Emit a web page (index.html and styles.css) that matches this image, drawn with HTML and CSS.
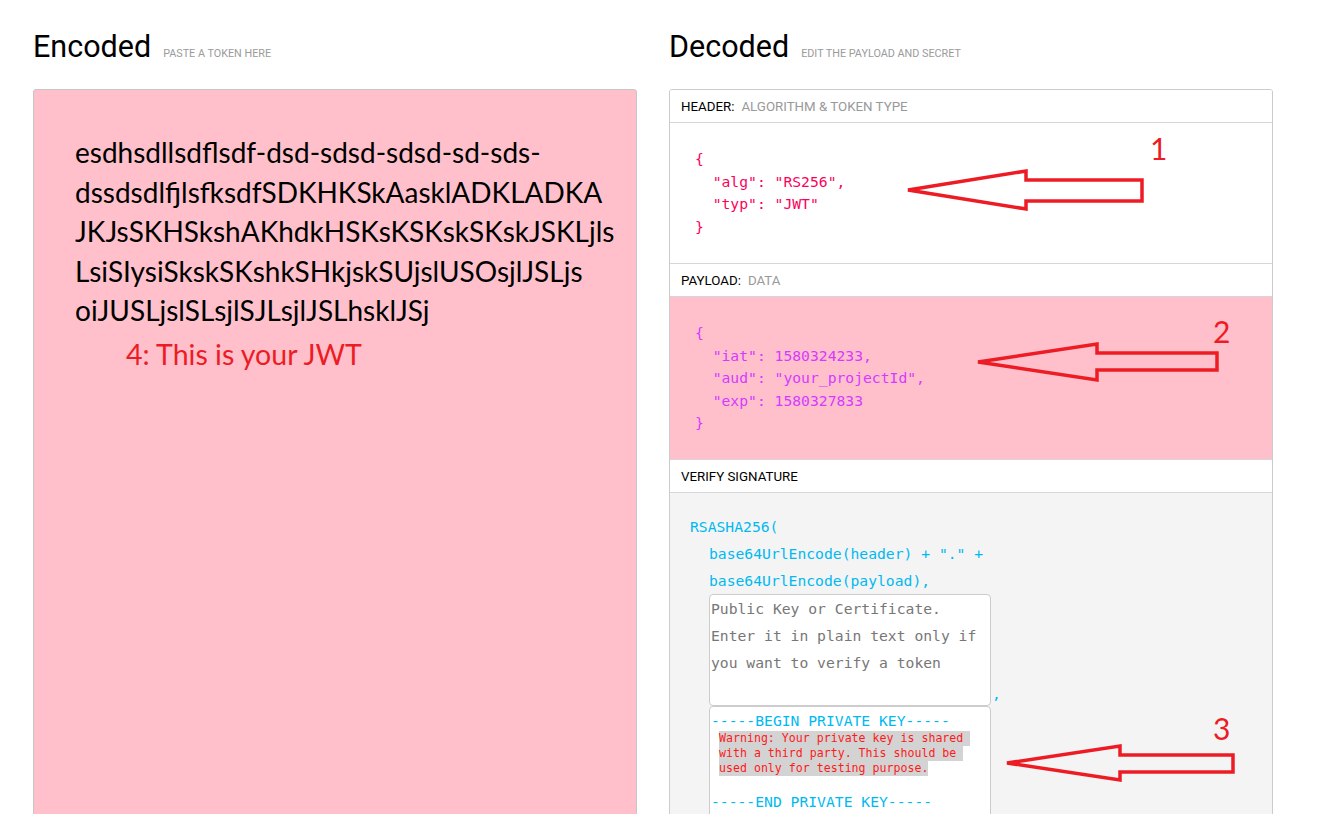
FILE: index.html
```html
<!DOCTYPE html>
<html lang="en">
<head>
<meta charset="utf-8">
<title>JWT Debugger</title>
<link rel="stylesheet" href="styles.css">
</head>
<body>
<div class="page">
  <section class="col">
    <h2 class="title">Encoded<span class="sub">PASTE A TOKEN HERE</span></h2>
    <div class="encoded">
      <div class="token">esdhsdllsdflsdf-dsd-sdsd-sdsd-sd-sds-<br>dssdsdlfjlsfksdfSDKHKSkAasklADKLADKA<br>JKJsSKHSkshAKhdkHSKsKSKskSKskJSKLjls<br>LsiSIysiSkskSKshkSHkjskSUjslUSOsjlJSLjs<br>oiJUSLjslSLsjlSJLsjlJSLhsklJSj</div>
      <div class="note">4: This is your JWT</div>
    </div>
  </section>
  <section class="col">
    <h2 class="title">Decoded<span class="sub">EDIT THE PAYLOAD AND SECRET</span></h2>
    <div class="decoded">
      <div class="label">HEADER:<span class="desc">ALGORITHM &amp; TOKEN TYPE</span></div>
      <pre class="code code-header">{
  "alg": "RS256",
  "typ": "JWT"
}</pre>
      <div class="label">PAYLOAD:<span class="desc">DATA</span></div>
      <pre class="code code-payload">{
  "iat": 1580324233,
  "aud": "your_projectId",
  "exp": 1580327833
}</pre>
      <div class="label">VERIFY SIGNATURE</div>
      <div class="verify">
        <div class="sig">RSASHA256(</div>
        <div class="indent">
          <div class="sig">base64UrlEncode(header) + "." +</div>
          <div class="sig">base64UrlEncode(payload),</div>
          <div class="keyrow">
            <div class="key key-public">Public Key or Certificate.<br>Enter it in plain text only if<br>you want to verify a token</div>
            <span class="sig comma">,</span>
          </div>
          <div class="key key-private">
            <div class="sig">-----BEGIN PRIVATE KEY-----</div>
            <div class="warning"><span class="warn-line">Warning: Your private key is shared </span><span class="warn-line">with a third party. This should be </span><span class="warn-line">used only for testing purpose.</span></div>
            <div class="sig">-----END PRIVATE KEY-----</div>
          </div>
        </div>
      </div>
    </div>
  </section>
  <svg class="annot" width="1319" height="814" viewBox="0 0 1319 814" aria-hidden="true">
    <polygon points="908,190 1026,171 1026,180 1142,180 1142,201 1026,201 1026,209"/>
    <polygon points="978,362 1097,344 1097,353 1217,353 1217,370 1097,370 1097,380"/>
    <polygon points="1007,763 1120,746 1120,755 1233,755 1233,772 1120,772 1120,780"/>
    <text x="1150" y="160">1</text>
    <text x="1213" y="343">2</text>
    <text x="1213" y="740">3</text>
  </svg>
</div>
</body>
</html>
```

FILE: styles.css
```css
html, body {
  margin: 0;
  padding: 0;
  height: 100%;
  overflow: hidden;
  background: #ffffff;
}

.page {
  position: relative;
  display: flex;
  gap: 32px;
  padding: 30px 0 0 33px;
  font-family: Roboto, "Liberation Sans", sans-serif;
  color: #000;
}

.col {
  width: 604px;
  flex: none;
}

.title {
  height: 34px;
  margin: 0 0 25px 0;
  font-family: Roboto, "Liberation Sans", sans-serif;
  font-size: 30.5px;
  font-weight: 400;
  line-height: 34px;
}

.sub {
  margin-left: 12px;
  font-size: 10.8px;
  line-height: 1;
  color: #9b9b9b;
  vertical-align: baseline;
}

.encoded {
  box-sizing: border-box;
  height: 760px;
  background: #ffc0cb;
  border: 1px solid #c6c6c6;
  border-radius: 3px;
  padding: 43px 20px 0 41px;
  font-family: Lato, "Open Sans", sans-serif;
}

.token {
  font-size: 28px;
  line-height: 39.5px;
  white-space: nowrap;
  color: #000;
}

.note {
  margin: 4px 0 0 51px;
  font-size: 28.5px;
  line-height: 39.5px;
  color: #ed1c24;
}

.decoded {
  box-sizing: border-box;
  height: 760px;
  border: 1px solid #cccccc;
  border-radius: 3px;
  overflow: hidden;
  display: flex;
  flex-direction: column;
}

.label {
  height: 32px;
  flex: none;
  display: flex;
  align-items: center;
  padding-left: 11px;
  font-size: 13.3px;
  color: #000;
  border-bottom: 1px solid #d6d6d6;
  background: #fff;
}

.desc {
  margin-left: 7px;
  color: #999999;
}

.code {
  margin: 0;
  flex: none;
  font-family: "DejaVu Sans Mono", "Liberation Mono", monospace;
  font-size: 14.7px;
  line-height: 22.5px;
  border-bottom: 1px solid #d6d6d6;
}

.code-header {
  padding: 25px 0 25px 25px;
  color: #fb015b;
  background: #fff;
}

.code-payload {
  padding: 25px 0 24.5px 25px;
  color: #d63aff;
  background: #ffc0cb;
}

.verify {
  flex: 1;
  background: #f4f4f4;
  padding: 20px 0 0 20px;
  font-family: "DejaVu Sans Mono", "Liberation Mono", monospace;
  font-size: 14.7px;
  line-height: 27px;
}

.sig {
  color: #00b9f1;
  white-space: pre;
}

.indent {
  margin-left: 19px;
}

.keyrow {
  display: flex;
  align-items: flex-end;
}

.comma {
  margin-left: 1px;
  line-height: 24px;
}

.key {
  box-sizing: border-box;
  width: 282px;
  background: #fff;
  border: 1px solid #cccccc;
  border-radius: 4px;
  padding: 0 1px;
}

.key-public {
  height: 112px;
  color: #777777;
  white-space: nowrap;
}

.key-private {
  height: 140px;
}

.warning {
  margin: -3px 0 12px 8px;
  font-family: "DejaVu Sans Mono", monospace;
  font-size: 11.6px;
  line-height: 15px;
  color: #ff1a1a;
}

.warn-line {
  display: block;
  width: fit-content;
  white-space: pre;
  background: #d3d3d3;
}

.annot {
  position: absolute;
  left: 0;
  top: 0;
  pointer-events: none;
}

.annot polygon {
  fill: none;
  stroke: #ed1c24;
  stroke-width: 3.5;
  stroke-linejoin: miter;
}

.annot text {
  font-family: Lato, "Open Sans", sans-serif;
  font-size: 30px;
  fill: #ed1c24;
}
```
